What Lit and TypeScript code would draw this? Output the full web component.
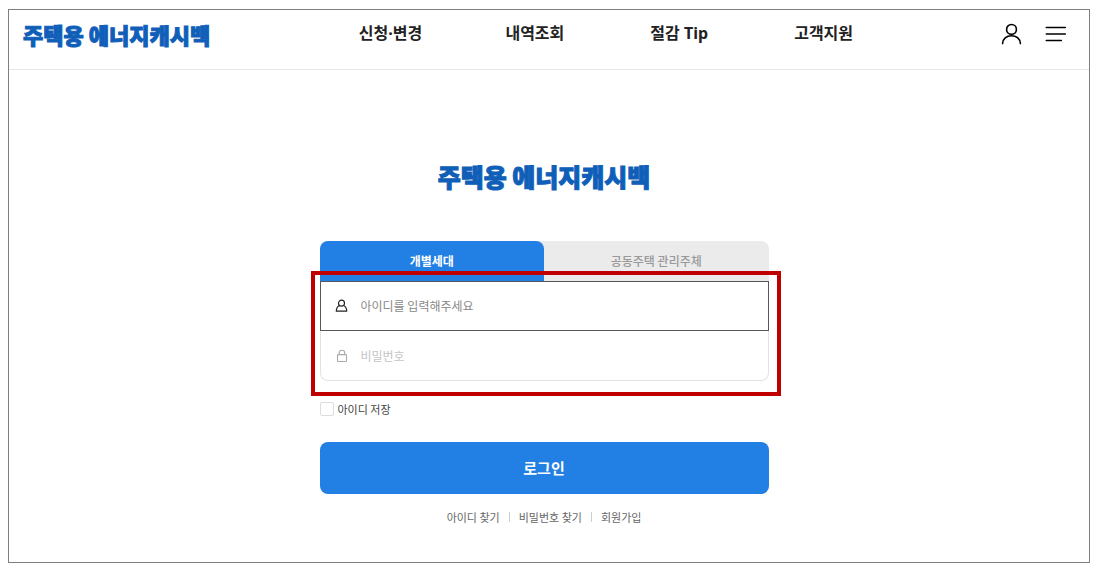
import { LitElement, html, css } from "lit";
import { customElement, state } from "lit/decorators.js";

@customElement("app-root")
export class AppRoot extends LitElement {
  static styles = css`
    :host {
      display: block;
      padding: 9px 14px 9px 8px;
      background: #fff;
      color: #222;
      font-family: "Noto Sans CJK KR", "Noto Sans", sans-serif;
    }
    *, *::before, *::after { box-sizing: border-box; }
    button, input { font-family: inherit; margin: 0; }
    a { color: inherit; text-decoration: none; }
    button { border: 0; padding: 0; background: none; cursor: pointer; }
    svg { display: block; fill: none; stroke: currentColor; }

    .page { border: 1px solid #7f7f7f; }

    .header {
      display: grid;
      grid-template-columns: 309fr 577fr 193fr;
      align-items: start;
      height: 60px;
      padding-top: 10px;
      border-bottom: 1px solid #e6e6e6;
    }
    .brand {
      color: #0f5fb9;
      font-weight: 900;
      white-space: nowrap;
      -webkit-text-stroke: 1px currentColor;
    }
    .brand-small { padding-left: 14px; font-size: 22px; line-height: 28px; }
    .brand-large { margin: 0; font-size: 25px; line-height: 32px; }
    .nav {
      display: grid;
      grid-template-columns: repeat(4, 1fr);
      text-align: center;
      font-family: "Noto Sans", "Noto Sans CJK KR", sans-serif;
      font-size: 16px;
      line-height: 26px;
      font-weight: 700;
      white-space: nowrap;
    }
    .tools {
      display: flex;
      justify-content: flex-end;
      gap: 20px;
      padding: 2px 21px 0 0;
      color: #222;
    }

    .main {
      display: flex;
      flex-direction: column;
      align-items: center;
      padding: 90px 10px 36px 0;
    }
    .login { width: 100%; max-width: 449px; margin-top: 49px; }
    .tabs { display: grid; grid-template-columns: 1fr 1fr; background: #ebebeb; border-radius: 8px 8px 0 0; }
    .tab {
      height: 40px;
      border-radius: 8px 8px 0 0;
      font-size: 12px;
      line-height: 16px;
      font-weight: 500;
      color: #999;
    }
    .tab[aria-selected="true"] { background: #227fe4; color: #fff; font-weight: 700; }

    .fields { position: relative; }
    .field {
      display: flex;
      align-items: center;
      gap: 12px;
      height: 50px;
      padding: 0 14px;
      border: 1px solid #e2e2e2;
      border-top: 0;
      border-radius: 0 0 8px 8px;
      color: #aaa;
    }
    .field-active {
      border: 1px solid #55575c;
      border-radius: 0;
      color: #222;
    }
    .input {
      flex: 1;
      min-width: 0;
      border: 0;
      padding: 0;
      outline: 0;
      background: none;
      color: #222;
      font-size: 12px;
      line-height: 20px;
    }
    .input::placeholder { color: #c4c4c4; }
    .field-active .input::placeholder { color: #888; }
    .highlight {
      position: absolute;
      inset: -10px -12px -15px -9px;
      border: 4px solid #c00000;
      pointer-events: none;
    }

    .remember {
      display: flex;
      align-items: center;
      gap: 4px;
      margin-top: 20px;
      font-size: 11px;
      line-height: 16px;
      color: #444;
    }
    .check {
      appearance: none;
      width: 14px;
      height: 14px;
      border: 1px solid #ddd;
      border-radius: 2px;
      background: #fff;
    }
    .check:checked { background: #227fe4; border-color: #227fe4; }

    .submit {
      display: block;
      width: 100%;
      height: 52px;
      margin-top: 25px;
      border-radius: 8px;
      background: #227fe4;
      color: #fff;
      font-size: 15px;
      line-height: 24px;
      font-weight: 700;
    }
    .links {
      display: flex;
      justify-content: center;
      align-items: center;
      gap: 9px;
      margin-top: 14px;
      font-size: 11px;
      line-height: 18px;
      color: #666;
    }
    .divider { width: 1px; height: 10px; background: #c8ced6; }
  `;

  @state() private tab = 0;

  private tabs = ["개별세대", "공동주택 관리주체"];
  private menu = ["신청·변경", "내역조회", "절감 Tip", "고객지원"];

  render() {
    return html`
      <div class="page">
        <header class="header">
          <a class="brand brand-small" href="#">주택용 에너지캐시백</a>
          <nav class="nav">${this.menu.map((m) => html`<a href="#">${m}</a>`)}</nav>
          <div class="tools">
            <button type="button" aria-label="마이페이지">
              <svg width="24" height="24" viewBox="0 0 24 24" stroke-width="1.6" stroke-linecap="round">
                <circle cx="11.5" cy="7.4" r="4.9" />
                <path d="M2.6 21.6C2.6 16.7 6.6 13.7 11.5 13.7S20.4 16.7 20.4 21.6" />
              </svg>
            </button>
            <button type="button" aria-label="전체메뉴">
              <svg width="24" height="24" viewBox="0 0 24 24" stroke-width="1.6" stroke-linecap="round">
                <path d="M2.3 5.5h19M2.3 12h19M2.3 18.5h15" />
              </svg>
            </button>
          </div>
        </header>
        <main class="main">
          <h1 class="brand brand-large">주택용 에너지캐시백</h1>
          <form class="login" @submit=${(e: Event) => e.preventDefault()}>
            <div class="tabs" role="tablist">
              ${this.tabs.map(
                (t, i) => html`<button class="tab" type="button" role="tab"
                  aria-selected=${this.tab === i ? "true" : "false"}
                  @click=${() => (this.tab = i)}>${t}</button>`
              )}
            </div>
            <div class="fields">
              <div class="field field-active">
                <label for="user-id" aria-label="아이디">
                  <svg width="14" height="14" viewBox="0 0 14 14" stroke-width="1.2" stroke-linejoin="round">
                    <circle cx="6.5" cy="4.2" r="3" />
                    <path d="M4.4 6.5C2.4 7.5 1.3 9.4 1.3 12.2H11.7C11.7 9.4 10.6 7.5 8.6 6.5" />
                  </svg>
                </label>
                <input class="input" id="user-id" type="text" placeholder="아이디를 입력해주세요" />
              </div>
              <div class="field">
                <label for="user-pw" aria-label="비밀번호">
                  <svg width="14" height="14" viewBox="0 0 14 14" stroke-width="1.1" stroke-linejoin="round">
                    <rect x="2.5" y="5.6" width="9" height="6.9" rx="0.8" />
                    <path d="M4.2 5.6V4a2.8 2.8 0 0 1 5.6 0V5.6" />
                  </svg>
                </label>
                <input class="input" id="user-pw" type="password" placeholder="비밀번호" />
              </div>
              <div class="highlight"></div>
            </div>
            <div class="remember">
              <input class="check" id="remember" type="checkbox" />
              <label for="remember">아이디 저장</label>
            </div>
            <button class="submit" type="submit">로그인</button>
            <div class="links">
              <a href="#">아이디 찾기</a>
              <span class="divider"></span>
              <a href="#">비밀번호 찾기</a>
              <span class="divider"></span>
              <a href="#">회원가입</a>
            </div>
          </form>
        </main>
      </div>
    `;
  }
}
